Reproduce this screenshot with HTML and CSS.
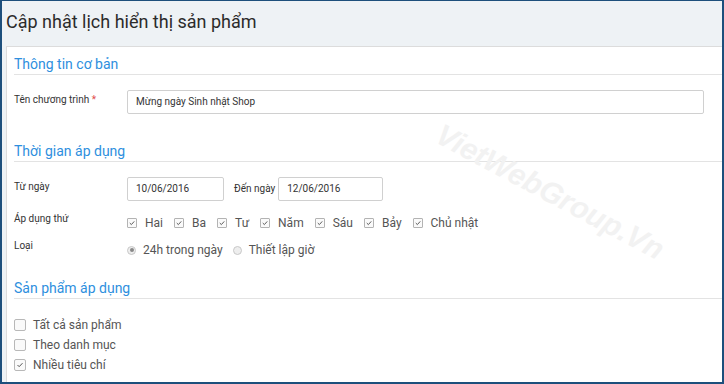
FILE: index.html
```html
<!DOCTYPE html>
<html lang="vi">
<head>
  <meta charset="UTF-8" />
  <title>Cập nhật lịch hiển thị sản phẩm</title>
  <link rel="stylesheet" href="styles.css">
</head>
<body>
  <div class="frame">
    <h1 class="page-title">Cập nhật lịch hiển thị sản phẩm</h1>

    <div class="panel">
      <h2 class="section-title">Thông tin cơ bản</h2>
      <div class="form-row row-name">
        <label class="field-label">Tên chương trình <span class="req">*</span></label>
        <div class="text-input input-wide">Mừng ngày Sinh nhật Shop</div>
      </div>

      <h2 class="section-title section-gap">Thời gian áp dụng</h2>
      <div class="form-row row-date">
        <label class="field-label">Từ ngày</label>
        <div class="text-input input-date">10/06/2016</div>
        <span class="inline-label">Đến ngày</span>
        <div class="text-input input-date2">12/06/2016</div>
      </div>
      <div class="form-row row-days">
        <label class="field-label">Áp dụng thứ</label>
        <div class="options options-days">
          <span class="opt"><span class="box"><svg viewBox="0 0 10 10"><polyline points="2.2,5 4.2,7 7.8,3"/></svg></span>Hai</span>
          <span class="opt"><span class="box"><svg viewBox="0 0 10 10"><polyline points="2.2,5 4.2,7 7.8,3"/></svg></span>Ba</span>
          <span class="opt"><span class="box"><svg viewBox="0 0 10 10"><polyline points="2.2,5 4.2,7 7.8,3"/></svg></span>Tư</span>
          <span class="opt"><span class="box"><svg viewBox="0 0 10 10"><polyline points="2.2,5 4.2,7 7.8,3"/></svg></span>Năm</span>
          <span class="opt"><span class="box"><svg viewBox="0 0 10 10"><polyline points="2.2,5 4.2,7 7.8,3"/></svg></span>Sáu</span>
          <span class="opt"><span class="box"><svg viewBox="0 0 10 10"><polyline points="2.2,5 4.2,7 7.8,3"/></svg></span>Bảy</span>
          <span class="opt"><span class="box"><svg viewBox="0 0 10 10"><polyline points="2.2,5 4.2,7 7.8,3"/></svg></span>Chủ nhật</span>
        </div>
      </div>
      <div class="form-row row-type">
        <label class="field-label">Loại</label>
        <div class="options">
          <span class="opt"><span class="radio is-on"></span>24h trong ngày</span>
          <span class="opt"><span class="radio"></span>Thiết lập giờ</span>
        </div>
      </div>

      <h2 class="section-title section-gap-sm">Sản phẩm áp dụng</h2>
      <ul class="product-list">
        <li><span class="box box-lg"></span>Tất cả sản phẩm</li>
        <li><span class="box box-lg"></span>Theo danh mục</li>
        <li><span class="box box-lg"><svg viewBox="0 0 12 12"><polyline points="3,6 5,8 9,3.8"/></svg></span>Nhiều tiêu chí</li>
      </ul>
    </div>

    <div class="watermark">VietWebGroup.Vn</div>
  </div>
</body>
</html>
```

FILE: styles.css
```css
body {
  margin: 0;
  background: #fff;
  font-family: Roboto, "Liberation Sans", Arial, sans-serif;
  color: #333;
}

.frame {
  position: relative;
  width: 724px;
  height: 384px;
  box-sizing: border-box;
  border: 2px solid #1d4f7c;
  border-top-width: 1px;
  background: #eef2f5;
  overflow: hidden;
}

.page-title {
  margin: 0;
  height: 45px;
  box-sizing: border-box;
  padding: 9px 0 0 4px;
  font-size: 18px;
  line-height: 24px;
  font-weight: normal;
  color: #2b2b2b;
}

.panel {
  margin-left: 4px;
  height: 340px;
  background: #fff;
  border-top: 1px solid #dcdcdc;
  border-left: 1px solid #dcdcdc;
  padding-left: 7px;
}

.section-title {
  margin: 0;
  padding-top: 7px;
  font-size: 14px;
  line-height: 20px;
  font-weight: normal;
  color: #2e8fde;
  border-bottom: 1px solid #e3e3e3;
}

.section-gap {
  margin-top: 20px;
}

.section-gap-sm {
  margin-top: 11px;
}

.form-row {
  display: flex;
  align-items: flex-start;
}

.field-label {
  width: 113px;
  flex-shrink: 0;
  font-size: 10px;
  line-height: 12px;
  color: #333;
}

.req {
  color: #e04b4b;
}

.row-name {
  margin-top: 15px;
}

.row-date {
  margin-top: 15px;
}

.row-name .field-label,
.row-date .field-label {
  padding-top: 4px;
}

.text-input {
  height: 24px;
  box-sizing: border-box;
  border: 1px solid #d0d0d0;
  border-radius: 2px;
  padding-left: 8px;
  font-size: 10px;
  line-height: 22px;
  color: #333;
}

.input-wide {
  width: 577px;
}

.input-date {
  width: 97px;
}

.input-date2 {
  width: 105px;
}

.inline-label {
  margin: 0 3px 0 10px;
  font-size: 10px;
  line-height: 24px;
  color: #333;
}

.row-days {
  margin-top: 12px;
}

.row-type {
  margin-top: 7px;
}

.options {
  display: flex;
  gap: 10px;
  font-size: 12px;
  line-height: 20px;
  color: #555;
}

.options-days {
  gap: 11px;
}

.opt {
  display: flex;
  align-items: center;
}

.box {
  width: 10px;
  height: 10px;
  box-sizing: border-box;
  border: 1px solid #b3b3b3;
  border-radius: 1px;
  background: #fafafa;
  margin-right: 8px;
  display: inline-flex;
}

.box svg {
  width: 100%;
  height: 100%;
  fill: none;
  stroke: #555;
  stroke-width: 1.2;
}

.radio {
  width: 9px;
  height: 9px;
  box-sizing: border-box;
  border-radius: 50%;
  border: 1px solid #c8c8c8;
  background: #eee;
  margin-right: 7px;
  position: relative;
}

.radio.is-on::after {
  content: "";
  position: absolute;
  left: 1.5px;
  top: 1.5px;
  width: 4px;
  height: 4px;
  border-radius: 50%;
  background: #888;
}

.product-list {
  list-style: none;
  margin: 16px 0 0;
  padding: 0;
  font-size: 12px;
  line-height: 20px;
  color: #555;
}

.product-list li {
  display: flex;
  align-items: center;
}

.box-lg {
  width: 12px;
  height: 12px;
  border-radius: 2px;
  border-color: #b8b8b8;
  margin-right: 7px;
}

.watermark {
  position: absolute;
  left: 418px;
  top: 174px;
  width: 260px;
  text-align: center;
  font-family: "Liberation Sans", Arial, sans-serif;
  font-size: 30px;
  font-weight: bold;
  font-style: italic;
  color: #f2f2f2;
  transform: rotate(28deg);
  pointer-events: none;
}
```
